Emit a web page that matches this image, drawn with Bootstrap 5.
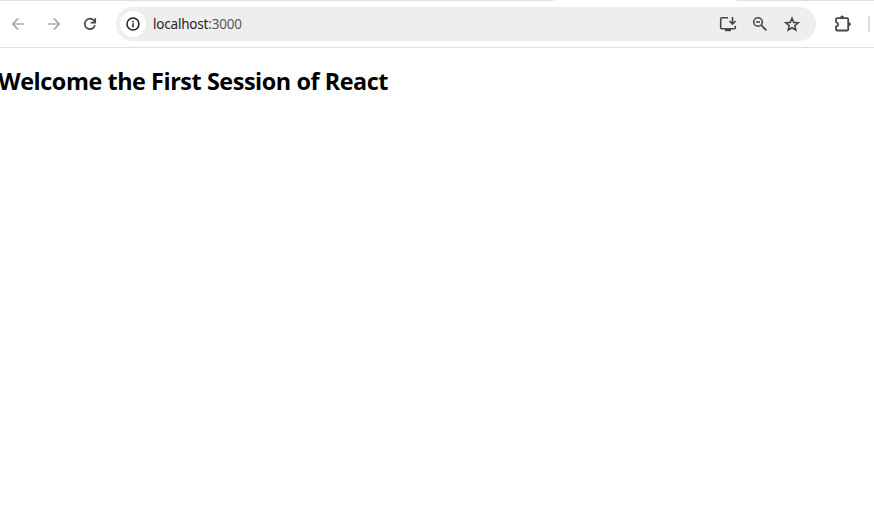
<!DOCTYPE html>
<html lang="en">
<head>
<meta charset="utf-8">
<meta name="viewport" content="width=device-width, initial-scale=1">
<title>React App</title>
<link href="https://cdn.jsdelivr.net/npm/bootstrap@5.3.0/dist/css/bootstrap.min.css" rel="stylesheet">
<style>
body { font-family: "Open Sans", "Noto Sans", sans-serif; color: #000; background: #fff; overflow: hidden; }
.tab-edge { height: 1px; }
.tab-edge span { background: #dfdfdf; height: 1px; }
.edge-left { width: 553px; }
.edge-right { width: 137px; }
.toolbar { height: 47px; border-bottom: 1px solid #dfdfdf; padding: 0 4px 1px 8px; }
.tool { width: 20px; height: 20px; padding: 0; border: 0; background: none; color: #474747; display: block; line-height: 0; }
.tool svg, .site-info svg { display: block; }
.tool.dim { color: #ababab; }
.history { gap: 16px; margin-right: 16px; }
.page-actions { gap: 12px; }
.address { width: 700px; height: 34px; background: #efedee; padding: 0 14px 0 4px; }
.site-info { width: 26px; height: 26px; background: #fff; color: #1f1f1f; }
.url { font-family: "Noto Sans", "Open Sans", sans-serif; font-size: 13.5px; line-height: 20px; margin-left: 7px; color: #1f1f1f; letter-spacing: -.2px; }
.url .port { color: #5a5a5a; }
.extensions { margin-left: 17px; }
.divider { width: 2px; height: 16px; background: #dfdfdf; margin-left: 15px; }
.headline { font-size: 23.4px; line-height: 32px; font-weight: 700; margin: 17px 0 0 -2px; letter-spacing: -.44px; }
</style>
<script src="https://cdn.jsdelivr.net/npm/bootstrap@5.3.0/dist/js/bootstrap.bundle.min.js"></script>
</head>
<body>
<header>
  <div class="tab-edge d-flex justify-content-between"><span class="edge-left"></span><span class="edge-right"></span></div>
  <nav class="toolbar d-flex align-items-center" aria-label="Browser toolbar">
    <div class="history d-flex">
      <button class="tool dim" aria-label="Back"><svg width="20" height="20" fill="none" stroke="currentColor" stroke-width="1.7"><path d="M16 10H5M10.3 4.3 4.7 10l5.6 5.7"/></svg></button>
      <button class="tool dim" aria-label="Forward"><svg width="20" height="20" fill="none" stroke="currentColor" stroke-width="1.7"><path d="M4 10h11M9.7 4.3l5.6 5.7-5.6 5.7"/></svg></button>
      <button class="tool" aria-label="Reload"><svg width="20" height="20" fill="none" stroke="currentColor" stroke-width="1.7"><path d="M15 11.2A5.2 5.2 0 1 1 13.9 6.5L15 7.7M15.2 4.2v4.5h-4.5"/></svg></button>
    </div>
    <div class="address rounded-pill d-flex align-items-center">
      <span class="site-info rounded-circle d-flex align-items-center justify-content-center"><svg width="16" height="16" fill="none" stroke="currentColor" stroke-width="1.5"><circle cx="8" cy="8" r="6"/><path d="M8 7.2v4M8 4.7v1.5"/></svg></span>
      <span class="url">localhost<span class="port">:3000</span></span>
      <div class="page-actions d-flex ms-auto">
        <button class="tool" aria-label="Install app"><svg width="20" height="20" fill="none" stroke="currentColor" stroke-width="1.6"><path d="M10 3.8H3.700Q2.700 3.800 2.700 4.800v9q0 1 1 1h12.600q1 0 1-1v-2M14.500 3v7M11.500 7l3 3 3-3"/><path d="M7 16h6" stroke-width="2.400"/></svg></button>
        <button class="tool" aria-label="Zoom out"><svg width="20" height="20" fill="none" stroke="currentColor" stroke-width="1.6"><circle cx="8" cy="8" r="4.3"/><path d="M6 8h4"/><path d="m11.2 11.2 5.2 5.2" stroke-width="1.8"/></svg></button>
        <button class="tool" aria-label="Bookmark"><svg width="20" height="20" fill="none" stroke="currentColor" stroke-width="1.6"><path d="m10 4.4 1.700 4 4.500.4-3.400 2.900 1 4.300L10 13.700 6.200 16l1-4.300-3.400-2.900 4.500-.4Z"/></svg></button>
      </div>
    </div>
    <button class="tool extensions" aria-label="Extensions"><svg width="20" height="20" fill="none" stroke="currentColor" stroke-width="1.8"><path d="M4 4.200h10.200q1 0 1 1v10.300q0 1-1 1H4q-1 0-1-1v-2.800q2.200-.6 2.200-2.300T3 8V5.200q0-1 1-1Z"/><path d="M7.200 3.800a1.900 2.300 0 0 1 3.800 0ZM15.700 8.200a2.200 1.900 0 0 1 0 3.800Z" fill="currentColor" stroke="none"/></svg></button>
    <span class="divider flex-shrink-0"></span>
  </nav>
</header>
<main><h1 class="headline text-nowrap">Welcome the First Session of React</h1></main>
</body>
</html>
